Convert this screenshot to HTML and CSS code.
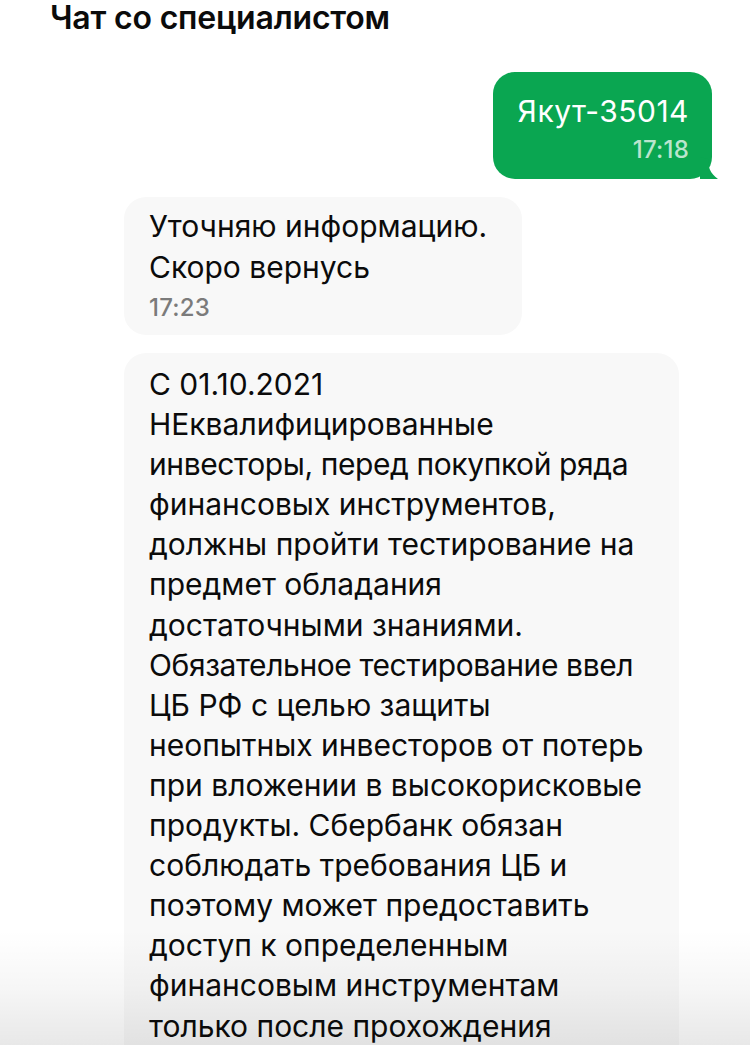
FILE: index.html
```html
<!DOCTYPE html>
<html lang="ru">
<head>
<meta charset="utf-8">
<title>Чат со специалистом</title>
<link rel="stylesheet" href="styles.css">
</head>
<body>
<div class="page">
  <h1 class="title">Чат со специалистом</h1>
  <div class="chat">
    <div class="row row-out">
      <div class="bubble bubble-out">
        <div class="msg">Якут-35014</div>
        <div class="time time-out">17:18</div>
        <svg class="tail" width="18" height="22" viewBox="0 0 18 22"><path d="M0 0 L8 2 C8 10 10 16 18 22 L0 22 Z" fill="#0aa651"/></svg>
      </div>
    </div>
    <div class="row row-in">
      <div class="bubble bubble-in short">
        <div class="msg">Уточняю информацию.<br>Скоро вернусь</div>
        <div class="time time-in">17:23</div>
      </div>
    </div>
    <div class="row row-in">
      <div class="bubble bubble-in long">
        <div class="msg lines">
          <span>С 01.10.2021</span>
          <span>НЕквалифицированные</span>
          <span class="tight">инвесторы, перед покупкой ряда</span>
          <span>финансовых инструментов,</span>
          <span>должны пройти тестирование на</span>
          <span>предмет обладания</span>
          <span>достаточными знаниями.</span>
          <span class="tight">Обязательное тестирование ввел</span>
          <span>ЦБ РФ с целью защиты</span>
          <span>неопытных инвесторов от потерь</span>
          <span>при вложении в высокорисковые</span>
          <span>продукты. Сбербанк обязан</span>
          <span>соблюдать требования ЦБ и</span>
          <span>поэтому может предоставить</span>
          <span>доступ к определенным</span>
          <span>финансовым инструментам</span>
          <span>только после прохождения</span>
          <span>тестирования.</span>
        </div>
      </div>
    </div>
  </div>
</div>
<div class="fade"></div>
</body>
</html>
```

FILE: styles.css
```css
html, body {
  margin: 0;
  padding: 0;
  background: #ffffff;
  overflow: hidden;
}
body {
  font-family: "Inter", "Roboto", "Liberation Sans", sans-serif;
  color: #0b0b0b;
  width: 750px;
  height: 1045px;
  position: relative;
}
.page {
  display: flex;
  flex-direction: column;
}
.title {
  margin: 0;
  padding: 0 0 0 50px;
  font-size: 32px;
  line-height: 36px;
  font-weight: 600;
  letter-spacing: -0.2px;
  height: 36px;
}
.chat {
  display: flex;
  flex-direction: column;
  gap: 18px;
  padding-top: 36px;
}
.row {
  display: flex;
}
.row-out {
  justify-content: flex-end;
  padding-right: 38px;
}
.row-in {
  justify-content: flex-start;
  padding-left: 124px;
}
.bubble {
  position: relative;
  border-radius: 22px;
  box-sizing: border-box;
}
.bubble-out {
  background: #0aa651;
  color: #ffffff;
  width: 219px;
  height: 107px;
  padding: 19px 23px 0 25px;
  display: flex;
  flex-direction: column;
  align-items: flex-end;
}
.bubble-out .msg {
  font-size: 30px;
  line-height: 40px;
  letter-spacing: 0.5px;
}
.time {
  font-size: 24px;
  line-height: 28px;
  letter-spacing: 0.2px;
  font-weight: 500;
}
.time-out {
  color: rgba(255, 255, 255, 0.72);
  margin-top: 5px;
}
.tail {
  position: absolute;
  right: -6px;
  bottom: 0;
}
.bubble-in {
  background: #f8f8f8;
  padding: 9px 25px 0 25px;
}
.bubble-in .msg {
  font-size: 30px;
  line-height: 41px;
  letter-spacing: 0;
}
.short {
  width: 398px;
  height: 138px;
}
.time-in {
  color: #7b7b7b;
  margin-top: 6px;
}
.long {
  width: 555px;
  padding-top: 11px;
  height: 800px;
  border-radius: 22px 22px 0 0;
}
.lines {
  display: flex;
  flex-direction: column;
}
.lines span {
  white-space: nowrap;
  line-height: 40.1px;
}
.lines .tight {
  letter-spacing: -0.4px;
}
.fade {
  position: absolute;
  left: 0;
  right: 0;
  bottom: 0;
  height: 115px;
  background: linear-gradient(to bottom, rgba(0,0,0,0) 0%, rgba(0,0,0,0.035) 50%, rgba(0,0,0,0.09) 100%);
  pointer-events: none;
}
```
